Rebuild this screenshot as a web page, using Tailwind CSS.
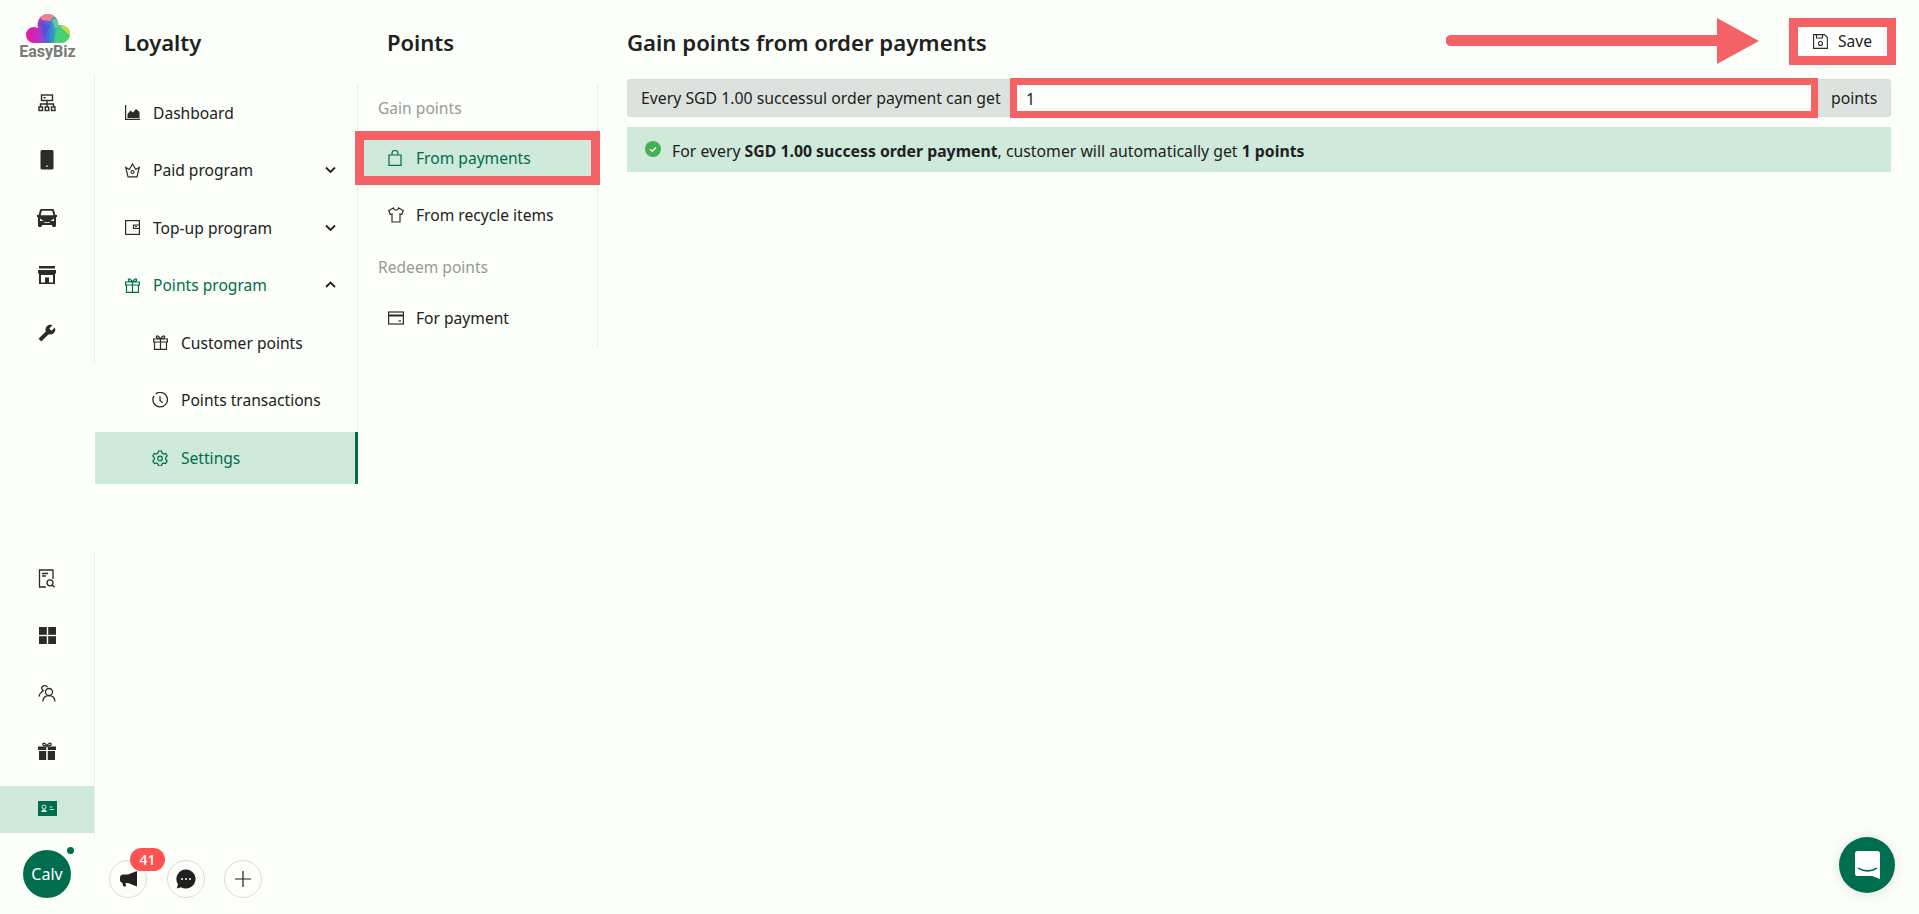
<!DOCTYPE html>
<html lang="en">
<head>
  <meta charset="UTF-8">
  <title>Loyalty - Points settings</title>
  <script src="https://cdn.jsdelivr.net/npm/@tailwindcss/browser@4"></script>
</head>
<body class="bg-[#fcfefa] text-[#212121] font-['Noto_Sans',sans-serif] text-[15.6px]">
  <div class="relative flex h-[914px] flex-col overflow-hidden">

    <div class="flex h-[838px]">
      <!-- Icon rail -->
      <aside class="flex w-[95px] shrink-0 flex-col">
        <div class="flex h-[74px] flex-col items-center pt-[14px]">
          <svg width="44" height="29" viewBox="0 0 44 29">
            <defs>
              <clipPath id="cloud">
                <circle cx="8" cy="21" r="8"/>
                <circle cx="22" cy="10.500" r="10.500"/>
                <circle cx="35" cy="20" r="9"/>
                <rect x="8" y="16" width="27" height="13"/>
              </clipPath>
              <linearGradient id="cg" x1="0" x2="1" y1="0" y2="0">
                <stop offset="0" stop-color="#f0149a"/>
                <stop offset="0.28" stop-color="#c02cc4"/>
                <stop offset="0.5" stop-color="#3f6fdc"/>
                <stop offset="0.72" stop-color="#27c4a8"/>
                <stop offset="1" stop-color="#8fe04a"/>
              </linearGradient>
            </defs>
            <g clip-path="url(#cloud)">
              <rect width="44" height="29" fill="url(#cg)"/>
              <polygon points="12,0 30,0 24,7 16,6" fill="#f2808c"/>
              <polygon points="26,6 32,4 33,13 29,14" fill="#7ac0a0"/>
              <polygon points="14,8 24,12 18,24" fill="#5750d0"/>
              <polygon points="30,16 44,12 44,29 28,29" fill="#45d078"/>
              <polygon points="34,12 44,12 44,22" fill="#c8dc40"/>
            </g>
          </svg>
          <span class="mt-[1px] font-['Roboto',sans-serif] text-[16px] leading-[16px] font-bold text-[#7a7a7a]">EasyBiz</span>
        </div>

        <nav class="border-r border-[#eceeea] pb-[1px]">
          <a class="flex h-[57.5px] items-center justify-center">
            <svg width="18" height="18" viewBox="0 0 18 18" fill="none" stroke="#2b2b2b" stroke-width="1.4"><rect x="3.5" y="1" width="11" height="5.5"/><path d="M9 6.5V10M2.5 13v-3h13v3M9 10v3"/><rect x="1" y="13" width="3.5" height="3.5"/><rect x="7.2" y="13" width="3.5" height="3.5"/><rect x="13.5" y="13" width="3.5" height="3.5"/><path d="M5.5 3.7h2"/></svg>
          </a>
          <a class="flex h-[57.5px] items-center justify-center">
            <svg width="14" height="20" viewBox="0 0 14 20"><rect x="0.5" width="13" height="19.5" rx="1.5" fill="#2b2b2b"/><rect x="6.3" y="15.5" width="1.4" height="1.4" fill="#fff"/></svg>
          </a>
          <a class="flex h-[57.5px] items-center justify-center">
            <svg width="20" height="18" viewBox="0 0 20 18"><path fill="#2b2b2b" fill-rule="evenodd" d="M4.5 0h11c.8 0 1.4.5 1.6 1.2L18.4 6H20v2h-1v8.5c0 .8-.7 1.5-1.5 1.5h-1c-.8 0-1.5-.7-1.5-1.5V16H5v.5c0 .8-.7 1.5-1.5 1.5h-1C1.700 18 1 17.300 1 16.500V8H0V6h1.600l1.300-4.800C3.100.5 3.700 0 4.500 0zM4.800 1.800 3.600 6.300h12.800l-1.200-4.500zM3 9.500v2.500h3.500zM17 9.500 13.500 12H17zM7.500 12.500v1.500h5v-1.500l-1 .7h-3z"/></svg>
          </a>
          <a class="flex h-[57.5px] items-center justify-center">
            <svg width="18" height="18" viewBox="0 0 18 18"><path fill="#2b2b2b" fill-rule="evenodd" d="M1 0h16v2.500H1zM0 4h18v3.500h-1V18H1V7.500H0zM3 9v7.500h4V11.500h4v5h4V9z"/></svg>
          </a>
          <a class="flex h-[57.5px] items-center justify-center">
            <svg width="18" height="18" viewBox="0 0 24 24"><path fill="#2b2b2b" transform="translate(24 0) scale(-1 1)" d="M22.700 19l-9.100-9.100c.9-2.300.4-5-1.500-6.900-2-2-5-2.400-7.400-1.300L9 6 6 9 1.600 4.700C.4 7.100.9 10.100 2.900 12.100c1.900 1.900 4.600 2.400 6.900 1.500l9.100 9.100c.4.4 1 .4 1.400 0l2.300-2.300c.5-.4.5-1.100.1-1.400z"/></svg>
          </a>
        </nav>

        <div class="flex-1"></div>

        <nav class="border-r border-[#eceeea]">
          <a class="flex h-[57.5px] items-center justify-center pb-[2px]">
            <svg width="18" height="19" viewBox="0 0 18 19" fill="none" stroke="#2b2b2b" stroke-width="1.3"><path d="M8 18H1.500V1H15v9"/><path d="M4 4.500h6M4 7h4"/><circle cx="12" cy="13.800" r="3"/><path d="m14.200 16 2.300 2.300"/></svg>
          </a>
          <a class="flex h-[57.5px] items-center justify-center pb-[2px]">
            <svg width="17" height="17" viewBox="0 0 17 17" fill="#2b2b2b"><rect width="7.800" height="7.800"/><rect x="9.200" width="7.800" height="7.800"/><rect y="9.200" width="7.800" height="7.800"/><rect x="9.200" y="9.200" width="7.800" height="7.800"/></svg>
          </a>
          <a class="flex h-[57.5px] items-center justify-center pb-[2px]">
            <svg width="18" height="18" viewBox="0 0 18 18" fill="none" stroke="#2b2b2b" stroke-width="1.300"><circle cx="11" cy="8" r="3.500"/><path d="M4.800 17.500c.3-3.500 2.800-5.800 6.200-5.800s5.700 2.300 6 5.800"/><path d="M9.500 3.300A3.200 3.200 0 0 0 3.600 3.800c0 1.300.7 2.300 1.700 2.900C3 8 1.500 10 1 12.500"/></svg>
          </a>
          <a class="flex h-[57.5px] items-center justify-center pb-[2px]">
            <svg width="18" height="18" viewBox="0 0 18 18"><path fill="none" stroke="#2b2b2b" stroke-width="1.300" d="M9 4C8 1 5 .3 4.800 2.200 4.700 3.600 7 4 9 4c2 0 4.300-.4 4.200-1.800C13 .3 10 1 9 4z"/><path fill="#2b2b2b" d="M0 4.500h8.200v3.500H0zM9.800 4.500H18v3.500H9.800zM1 9h7.200v9H1zM9.800 9H17v9H9.800z"/></svg>
          </a>
          <div class="flex h-[57.5px] py-[5px]">
            <a class="flex flex-1 items-center justify-center bg-[#cfe9da] pb-[2px]">
              <svg width="19" height="15" viewBox="0 0 19 15"><rect width="19" height="15" fill="#006d4e"/><circle cx="6" cy="6" r="2" fill="none" stroke="#cfe9da" stroke-width="1"/><path d="M3.200 11c.3-2 1.400-2.800 2.800-2.800S8.500 9 8.800 11z" fill="#cfe9da"/><path d="M11.500 6h3M11.500 8.500h4.500" stroke="#cfe9da" stroke-width="1"/></svg>
            </a>
          </div>
        </nav>
      </aside>

      <!-- Loyalty menu -->
      <div class="flex w-[263px] shrink-0 flex-col">
        <h2 class="flex h-[84px] items-center pl-[29px] text-[22px] font-semibold">Loyalty</h2>
        <nav class="h-[400px] border-r border-[#eceeea]">
          <a class="flex h-[57.500px] items-center pl-[30px] pt-[2px] [&>svg]:-mt-[2px]">
            <svg class="mr-[13px]" width="15" height="15" viewBox="0 0 15 15"><path fill="none" stroke="#2b2b2b" stroke-width="1.200" d="M.6 0v14.400H15"/><path fill="#2b2b2b" d="M2.500 13V9l3-3.500 2.500 2L11 4l3.500 3v6z"/></svg>
            Dashboard
          </a>
          <a class="flex h-[57.500px] items-center pl-[30px] pr-[21px]">
            <svg class="mr-[13px]" width="15" height="15" viewBox="0 0 15 15" fill="none" stroke="#2b2b2b" stroke-width="1.200"><path d="M3 13.800.8 4.500l3.500 2L7.500 1l3.200 5.500 3.500-2L12 13.800z"/><circle cx="7.500" cy="9" r="1.500"/></svg>
            <span class="flex-1">Paid program</span>
            <svg width="11" height="8" viewBox="0 0 11 8" fill="none" stroke="#212121" stroke-width="1.800"><path d="m1 1.500 4.500 4.500L10 1.500"/></svg>
          </a>
          <a class="flex h-[57.500px] items-center pl-[30px] pr-[21px] pt-[2px] [&>svg]:-mt-[2px]">
            <svg class="mr-[13px]" width="15" height="15" viewBox="0 0 15 15" fill="none" stroke="#2b2b2b" stroke-width="1.200"><rect x=".6" y=".6" width="13.800" height="13.800"/><path d="M14 5H8.500v3.500H14"/><path d="M10 6.700h2"/></svg>
            <span class="flex-1">Top-up program</span>
            <svg width="11" height="8" viewBox="0 0 11 8" fill="none" stroke="#212121" stroke-width="1.800"><path d="m1 1.500 4.500 4.500L10 1.500"/></svg>
          </a>
          <a class="flex h-[57.500px] items-center pl-[30px] pr-[21px] text-[#006d4e]">
            <svg class="mr-[13px]" width="15" height="15" viewBox="0 0 15 15" fill="none" stroke="#006d4e" stroke-width="1.200"><path d="M.6 4h13.800v3H.6zM1.500 7v7.400h12V7M7.500 4v10.400M7.500 4C6 1 3.500 0 3.300 1.800 3.200 3.300 5.500 4 7.500 4c2 0 4.300-.7 4.200-2.200C11.500 0 9 1 7.500 4z"/></svg>
            <span class="flex-1">Points program</span>
            <svg width="11" height="8" viewBox="0 0 11 8" fill="none" stroke="#212121" stroke-width="1.800"><path d="m1 6 4.500-4.500L10 6"/></svg>
          </a>
          <a class="flex h-[57.500px] items-center pl-[58px] pt-[1px] [&>svg]:-mt-[2px]">
            <svg class="mr-[13px]" width="15" height="15" viewBox="0 0 15 15" fill="none" stroke="#2b2b2b" stroke-width="1.200"><path d="M.6 4h13.800v3H.6zM1.500 7v7.400h12V7M7.500 4v10.400M7.500 4C6 1 3.500 0 3.300 1.800 3.200 3.300 5.500 4 7.500 4c2 0 4.300-.7 4.200-2.200C11.500 0 9 1 7.500 4z"/></svg>
            Customer points
          </a>
          <a class="flex h-[57.500px] items-center pl-[57px]">
            <svg class="mr-[13px]" width="16" height="16" viewBox="0 0 15 15" fill="none" stroke="#2b2b2b" stroke-width="1.200"><path d="M3.500 1.800a6.800 6.800 0 1 1-1.600 1.800"/><path d="M7.500 4v4l2.500 2"/></svg>
            Points transactions
          </a>
          <div class="py-[2.500px]">
            <a class="-mr-[1px] flex h-[52px] items-center border-r-[3px] border-[#006d4e] bg-[#cfe9da] pl-[57px] pt-[2px] text-[#006d4e] [&>svg]:-mt-[2px]">
              <svg class="mr-[13px]" width="16" height="16" viewBox="0 0 16 16" fill="none" stroke="#006d4e" stroke-width="1.200"><path d="M6.500 1h3l.5 2 1.700 1 2-.6 1.500 2.600-1.500 1.500v1.900l1.500 1.500-1.500 2.600-2-.6-1.700 1-.5 2h-3l-.5-2-1.700-1-2 .6L.8 10.900l1.500-1.500V7.500L.8 6l1.500-2.600 2 .6 1.700-1z"/><circle cx="8" cy="8.500" r="2.300"/></svg>
              Settings
            </a>
          </div>
        </nav>
      </div>

      <!-- Points submenu -->
      <div class="flex w-[240px] shrink-0 flex-col">
        <h2 class="flex h-[84px] items-center pl-[29px] text-[22px] font-semibold">Points</h2>
        <nav class="h-[263px] border-r border-[#eceeea]">
          <div class="flex h-[47px] items-center pl-[20px] pt-[2px] text-[#999]">Gain points</div>
          <a class="relative -ml-[3px] -mr-[3px] flex h-[54px] items-center border-[9px] border-[#f56266] bg-[#cfe9da] pl-[24px] pt-[2px] text-[#006d4e] [&>svg]:-mt-[2px]">
            <svg class="mr-[14px]" width="14" height="16" viewBox="0 0 14 16" fill="none" stroke="#006d4e" stroke-width="1.200"><path d="M1 5h12v10.400H1zM4 5V3a3 2.500 0 0 1 6 0v2"/></svg>
            From payments
          </a>
          <a class="flex h-[58px] items-center pl-[30px] pt-[3px] [&>svg]:-mt-[2px]">
            <svg class="mr-[12px]" width="16" height="16" viewBox="0 0 16 16" fill="none" stroke="#2b2b2b" stroke-width="1.200"><path d="M5.500 1 .8 3.500l1.400 4L4 7v8h8V7l1.800.5 1.400-4L10.500 1c-.5 2.700-4.500 2.700-5 0z"/></svg>
            From recycle items
          </a>
          <div class="flex h-[46px] items-center pl-[20px] pt-[4px] text-[#999]">Redeem points</div>
          <a class="flex h-[58px] items-center pl-[30px] pt-[2px] [&>svg]:-mt-[2px]">
            <svg class="mr-[12px]" width="16" height="14" viewBox="0 0 16 14" fill="none" stroke="#2b2b2b" stroke-width="1.200"><rect x=".6" y="1" width="14.800" height="12"/><path d="M.6 4.500h14.800" stroke-width="2"/><path d="M10.500 10h2.500"/></svg>
            For payment
          </a>
        </nav>
      </div>

      <!-- Main -->
      <main class="flex-1 pl-[29px] pr-[28px] text-[15.8px]">
        <header class="flex h-[79px] items-center justify-between pt-[4px]">
          <h1 class="mt-[2px] text-[22.2px] font-semibold">Gain points from order payments</h1>
          <button class="-mr-[5px] flex h-[47px] w-[107px] items-center justify-center border-[9px] border-[#f56266] bg-white text-[15.6px]">
            <svg class="mr-[10px]" width="15" height="15" viewBox="0 0 15 15" fill="none" stroke="#2b2b2b" stroke-width="1.100"><path d="M.6.6h10.800l3 3v10.800H.6z"/><path d="M3.500.6v3.400h6V.6"/><circle cx="7.500" cy="9.500" r="2"/></svg>
            Save
          </button>
        </header>
        <div class="flex h-[38px] items-center">
          <span class="flex h-[38px] w-[383px] items-center rounded-l-[3px] border border-[#d6dcd8] bg-[#dce3de] pl-[13px] pt-[2px]">Every SGD 1.00 successul order payment can get</span>
          <input class="h-[40px] flex-1 border-[7px] border-[#f56266] bg-[#fcfefa] pl-[9px] pt-[2px] outline-none" value="1">
          <span class="flex h-[38px] w-[73px] items-center rounded-r-[3px] border border-[#d6dcd8] bg-[#dce3de] pl-[12px] pt-[2px]">points</span>
        </div>
        <div class="mt-[10px] flex h-[45px] items-center bg-[#cfe9da] pl-[18px] pt-[4px]">
          <svg class="-mt-[5px] mr-[11px]" width="16" height="16" viewBox="0 0 16 16"><circle cx="8" cy="8" r="8" fill="#45b053"/><path d="m5 8.200 2.200 2.200L11 6.500" fill="none" stroke="#fff" stroke-width="1.200"/></svg>
          <p>For every <b class="font-bold">SGD 1.00 success order payment</b>, customer will automatically get <b class="font-bold">1 points</b></p>
        </div>
      </main>
    </div>

    <!-- Bottom bar -->
    <footer class="flex h-[76px] pl-[23px] pt-[12px]">
      <div class="relative flex h-[48px] w-[48px] items-center justify-center rounded-full bg-[#006d4e] text-[16px] text-white">
        Calv
        <span class="absolute -right-[3px] -top-[3px] h-[7px] w-[7px] rounded-full bg-[#006d4e]"></span>
      </div>
      <div class="ml-[38px] mt-[10px] flex gap-[20px]">
        <button class="relative flex h-[38px] w-[38px] items-center justify-center rounded-full border border-[#dcdcdc]">
          <svg width="18" height="16" viewBox="0 0 18 16" fill="#212121"><path d="M18 0v15.500L9 12H4.500A3 3 0 0 1 1 9V6.500A3 3 0 0 1 4.500 3.500H9z"/><path d="M3.500 12h3l.5 2.500c.2 1-2.800 1.500-3 .2z"/></svg>
          <span class="absolute -right-[19px] -top-[13px] flex h-[23px] w-[35px] items-center justify-center rounded-full bg-[#ff5353] text-[14px] font-medium text-white">41</span>
        </button>
        <button class="flex h-[38px] w-[38px] items-center justify-center rounded-full border border-[#dcdcdc]">
          <svg width="20" height="20" viewBox="0 0 20 20"><path fill="#212121" d="M10 .5a9.500 9.500 0 1 1-4.800 17.700L.8 19.500l1.200-4.300A9.500 9.500 0 0 1 10 .5z"/><circle cx="6" cy="10" r="1" fill="#fff"/><circle cx="10" cy="10" r="1" fill="#fff"/><circle cx="14" cy="10" r="1" fill="#fff"/></svg>
        </button>
        <button class="-ml-[1px] flex h-[38px] w-[38px] items-center justify-center rounded-full border border-[#dcdcdc]">
          <svg width="16" height="16" viewBox="0 0 16 16" fill="none" stroke="#212121" stroke-width="1.200"><path d="M8 0v16M0 8h16"/></svg>
        </button>
      </div>
    </footer>

    <!-- Chat launcher -->
    <div class="absolute bottom-[21px] right-[24px] flex h-[56px] w-[56px] items-center justify-center rounded-full bg-[#006d4e] shadow-[0_1px_12px_rgba(0,0,0,0.12)]">
      <svg width="25" height="28" viewBox="0 0 26 29"><path fill="#fff" d="M3 0h20a3 3 0 0 1 3 3v26l-8-3H3a3 3 0 0 1-3-3V3a3 3 0 0 1 3-3z"/><path d="M4 18c5 3.500 13 3.500 18 0" fill="none" stroke="#006d4e" stroke-width="1.800" stroke-linecap="round"/></svg>
    </div>

    <!-- Annotation arrow -->
    <svg class="absolute left-[1446px] top-[18px]" width="314" height="46" viewBox="0 0 314 46">
      <path d="M5 17h266V0l42 23-42 23V28H5a5.500 5.500 0 0 1 0-11z" fill="#f56266"/>
    </svg>
  </div>
</body>
</html>
